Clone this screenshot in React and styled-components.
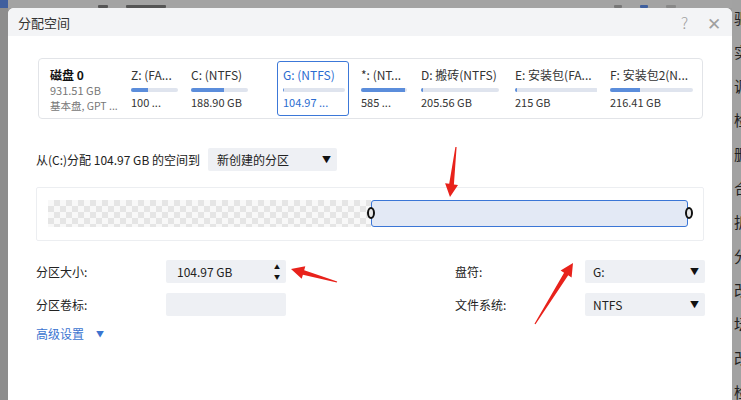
import React from "react";
import styled, { createGlobalStyle } from "styled-components";

const Global = createGlobalStyle`
  html, body { margin: 0; padding: 0; }
  body {
    width: 741px; height: 400px; overflow: hidden;
    background: #9c9c9c;
    font-family: "Noto Sans CJK SC", "Noto Sans", sans-serif;
    color: #222;
  }
`;

const Page = styled.div`
  position: relative;
  width: 741px;
  height: 400px;
  overflow: hidden;
  display: grid;
  grid-template-columns: 8px 1fr 9px;
  grid-template-rows: 8px 392px;
  background: #9d9d9d;
`;

const Corner = styled.div`
  grid-column: 1;
  grid-row: 1;
  background: #3f5f9e;
  height: 13px;
`;

const TopStrip = styled.div`
  grid-column: 2;
  grid-row: 1;
  display: flex;
  align-items: flex-end;
  gap: 18px;
  padding-left: 40px;
  overflow: hidden;
  background: #a3a3a3;
`;

const TopText = styled.span`
  width: ${(p) => p.w}px;
  margin-left: ${(p) => p.ml || 0}px;
  height: 3px;
  background: ${(p) => p.c || "#555"};
  border-radius: 1px;
`;

const LeftStrip = styled.div`
  grid-column: 1;
  grid-row: 2;
  background: #8d8d8d;
`;

const RightStrip = styled.div`
  grid-column: 3;
  grid-row: 1 / 3;
  background: #a2a2a2;
  display: flex;
  flex-direction: column;
  gap: 19px;
  padding-top: 10px;
  padding-left: 2px;
  overflow: hidden;
  font-size: 15px;
  line-height: 15px;
  color: #222;
  white-space: nowrap;
`;

const Dialog = styled.div`
  grid-column: 2;
  grid-row: 2;
  background: #fff;
  border-radius: 6px 6px 0 0;
  display: flex;
  flex-direction: column;
  overflow: hidden;
`;

const TitleBar = styled.div`
  height: 28px;
  flex-shrink: 0;
  background: #f3f4f6;
  display: flex;
  align-items: center;
  padding: 0 4px 0 10px;
  font-size: 13px;
  color: #333;
`;

const Title = styled.div`
  flex: 1;
`;

const TitleBtn = styled.div`
  width: 29px;
  display: flex;
  justify-content: center;
  align-items: center;
  color: #a0a0a0;
  font-size: ${(p) => p.fs || 16}px;
  font-weight: 300;
`;

const Body = styled.div`
  padding: 22px 28px 0 28px;
  display: flex;
  flex-direction: column;
`;

const DiskStrip = styled.div`
  margin: 0 1px 0 2px;
  height: 61px;
  box-sizing: border-box;
  border: 1px solid #e2e4e8;
  border-radius: 4px;
  display: flex;
  align-items: center;
  gap: 6px;
  padding-left: 5px;
`;

const Cell = styled.div`
  box-sizing: border-box;
  width: ${(p) => p.w}px;
  height: 55px;
  padding: 5px 5px 0 5px;
  border: 1.5px solid ${(p) => (p.sel ? "#3c78d8" : "transparent")};
  border-radius: 3px;
  display: flex;
  flex-direction: column;
  color: ${(p) => (p.sel ? "#2b6cd0" : "#333")};
  white-space: nowrap;
  overflow: ${(p) => (p.free ? "visible" : "hidden")};
`;

const CellTitle = styled.div`
  font-size: 12px;
  line-height: 16px;
  font-weight: ${(p) => (p.bold ? 700 : 400)};
  color: ${(p) => (p.bold ? "#111" : "inherit")};
`;

const CellSub = styled.div`
  font-size: ${(p) => p.fs || 11}px;
  line-height: 15px;
  color: ${(p) => p.c || "inherit"};
`;

const Bar = styled.div`
  width: ${(p) => p.w}px;
  height: 4px;
  margin: 5px 0 3px;
  background: #dfe4ee;
  border-radius: 2px;
  overflow: hidden;
  display: flex;
`;

const Fill = styled.div`
  background: #5b8ddb;
  height: 100%;
`;

const AllocRow = styled.div`
  margin-top: 29px;
  display: flex;
  align-items: center;
  gap: 8px;
  font-size: 12px;
  color: #222;
`;

const Select = styled.div`
  box-sizing: border-box;
  width: ${(p) => p.w}px;
  height: 23px;
  background: #eef0f4;
  border-radius: 2px;
  display: flex;
  align-items: center;
  justify-content: space-between;
  padding: 0 6px 0 ${(p) => p.pl || 9}px;
  font-size: 12px;
  color: #222;
`;

const Caret = styled.span`
  font-size: 9px;
  color: #111;
`;

const PartArea = styled.div`
  margin-top: 16px;
  height: 54px;
  box-sizing: border-box;
  border: 1px solid #eceef1;
  border-radius: 2px;
  padding: 12px 15px 13px 11px;
  display: flex;
`;

const Checker = styled.div`
  width: 323px;
  height: 27px;
  background-color: #f8f8f8;
  background-image: conic-gradient(#e5e5e5 25%, transparent 0 50%, #e5e5e5 0 75%, transparent 0);
  background-size: 12px 12px;
`;

const Part = styled.div`
  position: relative;
  flex: 1;
  height: 27px;
  box-sizing: border-box;
  background: #e3e9f5;
  border: 1.5px solid #3b76d6;
  border-radius: 3px;
`;

const Handle = styled.div`
  position: absolute;
  top: 6px;
  ${(p) => (p.right ? "right: -5.5px;" : "left: -5.5px;")}
  box-sizing: border-box;
  width: 8px;
  height: 12px;
  border: 2px solid #111;
  border-radius: 50%;
  background: #e8e8e8;
`;

const FormGrid = styled.div`
  margin-top: 19px;
  display: grid;
  grid-template-columns: 130px 120px 169px 130px 120px;
  grid-auto-rows: 23px;
  row-gap: 10px;
  align-items: center;
  font-size: 12px;
  color: #222;
`;

const Label = styled.div``;

const Input = styled.div`
  height: 23px;
  background: #eef0f4;
  border-radius: 2px;
  display: flex;
  align-items: center;
  justify-content: space-between;
  padding: 0 6px 0 11px;
  font-size: 12px;
`;

const Spin = styled.div`
  display: flex;
  flex-direction: column;
  font-size: 6px;
  line-height: 10px;
  color: #111;
`;

const Advanced = styled.div`
  margin-top: 9px;
  display: flex;
  align-items: center;
  gap: 12px;
  color: #3b74d0;
  font-size: 12px;
`;

const AdvCaret = styled.span`
  font-size: 8px;
  color: #3b74d0;
`;

const Annot = styled.svg`
  position: absolute;
  left: 0;
  top: 0;
  pointer-events: none;
`;

function arrowPoints(x1, y1, x2, y2) {
  const dx = x2 - x1, dy = y2 - y1;
  const len = Math.hypot(dx, dy);
  const ux = dx / len, uy = dy / len;
  const px = -uy, py = ux;
  const headLen = 13, headW = 6.5, shaftW = 2.4, tailW = 0.6;
  const bx = x2 - ux * headLen, by = y2 - uy * headLen;
  const pts = [
    [x1 + px * tailW, y1 + py * tailW],
    [bx + px * shaftW, by + py * shaftW],
    [bx + px * headW, by + py * headW],
    [x2, y2],
    [bx - px * headW, by - py * headW],
    [bx - px * shaftW, by - py * shaftW],
    [x1 - px * tailW, y1 - py * tailW],
  ];
  return pts.map((p) => p.map((v) => v.toFixed(1)).join(",")).join(" ");
}

const disks = [
  { t: "Z: (FA...", s: "100 ...", w: 54, bar: 47, f: 0.36 },
  { t: "C: (NTFS)", s: "188.90 GB", w: 86, bar: 57, f: 0.58 },
  { t: "G: (NTFS)", s: "104.97 ...", w: 72, bar: 62, f: 0.02, sel: true },
  { t: "*: (NT...", s: "585 ...", w: 54, bar: 46, f: 0.95 },
  { t: "D: 搬砖(NTFS)", s: "205.56 GB", w: 88, bar: 78, f: 0.02 },
  { t: "E: 安装包(FA...", s: "215 GB", w: 89, bar: 83, f: 0.02 },
  { t: "F: 安装包2(N...", s: "216.41 GB", w: 92, bar: 83, f: 0.36 },
];

const sideChars = ["驱", "实", "调", "检", "删", "合", "拆", "分", "改", "坛", "改", "检"];

export default function App() {
  return (
    <>
      <Global />
      <Page>
        <Corner />
        <TopStrip>
          <TopText w={10} ml={50} />
          <TopText w={40} />
          <TopText w={8} ml={430} c="#777" />
          <TopText w={8} c="#3f5f9e" />
          <TopText w={10} c="#888" />
        </TopStrip>
        <LeftStrip />
        <Dialog>
          <TitleBar>
            <Title>分配空间</Title>
            <TitleBtn>?</TitleBtn>
            <TitleBtn fs={17}>✕</TitleBtn>
          </TitleBar>
          <Body>
            <DiskStrip>
              <Cell w={75} free>
                <CellTitle bold>磁盘 0</CellTitle>
                <CellSub c="#777">931.51 GB</CellSub>
                <CellSub c="#777" fs={10.5}>基本盘, GPT ...</CellSub>
              </Cell>
              {disks.map((d) => (
                <Cell key={d.t} w={d.w} sel={d.sel}>
                  <CellTitle>{d.t}</CellTitle>
                  <Bar w={d.bar}>
                    <Fill style={{ width: `${Math.max(d.f * 100, 2)}%` }} />
                  </Bar>
                  <CellSub>{d.s}</CellSub>
                </Cell>
              ))}
            </DiskStrip>

            <AllocRow>
              <span>从(C:)分配 104.97 GB 的空间到</span>
              <Select w={129}>
                新创建的分区
                <Caret>▼</Caret>
              </Select>
            </AllocRow>

            <PartArea>
              <Checker />
              <Part>
                <Handle />
                <Handle right />
              </Part>
            </PartArea>

            <FormGrid>
              <Label>分区大小:</Label>
              <Input>
                104.97 GB
                <Spin>
                  <span>▲</span>
                  <span>▼</span>
                </Spin>
              </Input>
              <span />
              <Label>盘符:</Label>
              <Select w={120} pl={8}>
                G:
                <Caret>▼</Caret>
              </Select>
              <Label>分区卷标:</Label>
              <Input />
              <span />
              <Label>文件系统:</Label>
              <Select w={120} pl={8}>
                NTFS
                <Caret>▼</Caret>
              </Select>
            </FormGrid>

            <Advanced>
              高级设置
              <AdvCaret>▼</AdvCaret>
            </Advanced>
          </Body>
        </Dialog>
        <RightStrip>
          {sideChars.map((c, i) => (
            <span key={i}>{c}</span>
          ))}
        </RightStrip>
        <Annot width="741" height="400" viewBox="0 0 741 400">
          <polygon points={arrowPoints(456, 147, 450, 197)} fill="#e8221b" />
          <polygon points={arrowPoints(337, 282, 291, 269)} fill="#e8221b" />
          <polygon points={arrowPoints(535, 324, 573, 263)} fill="#e8221b" />
        </Annot>
      </Page>
    </>
  );
}
